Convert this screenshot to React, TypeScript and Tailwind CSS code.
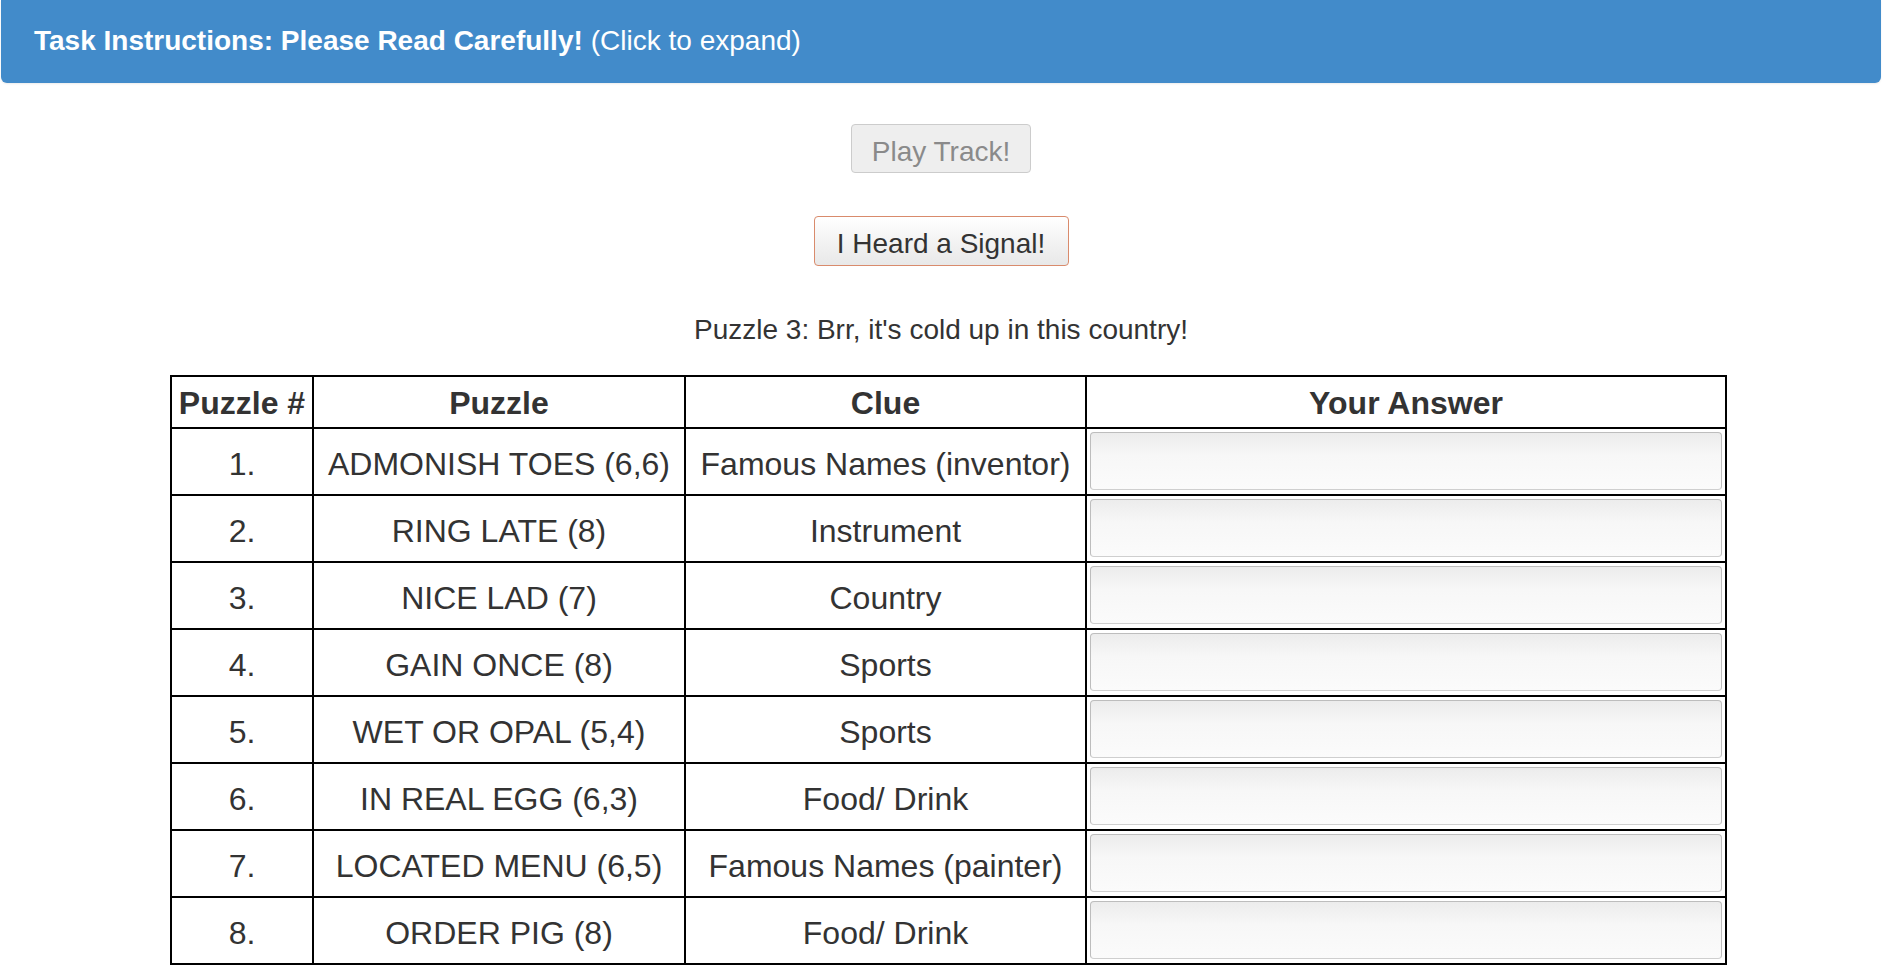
import React from "react";

const rows = [
  ["1.", "ADMONISH TOES (6,6)", "Famous Names (inventor)"],
  ["2.", "RING LATE (8)", "Instrument"],
  ["3.", "NICE LAD (7)", "Country"],
  ["4.", "GAIN ONCE (8)", "Sports"],
  ["5.", "WET OR OPAL (5,4)", "Sports"],
  ["6.", "IN REAL EGG (6,3)", "Food/ Drink"],
  ["7.", "LOCATED MENU (6,5)", "Famous Names (painter)"],
  ["8.", "ORDER PIG (8)", "Food/ Drink"],
];

export default function App() {
  return (
    <div
      className="min-h-[980px] bg-white text-[#333]"
      style={{ fontFamily: '"Liberation Sans", Arial, Helvetica, sans-serif' }}
    >
      <div className="mx-[1px] h-[83px] rounded-b-[6px] bg-[#428bca] shadow-[0_1px_2px_rgba(0,0,0,0.08)] flex items-center pl-[33px] text-white text-[28px] leading-[32px] pb-[1px]">
        <span className="font-bold">Task Instructions: Please Read Carefully!</span>
        <span className="ml-[8px]">(Click to expand)</span>
      </div>

      <div className="flex flex-col items-center">
        <button className="mt-[41px] w-[180px] h-[49px] rounded-[4px] border border-[#cccccc] bg-[#eeeeee] text-[#8a8a8a] text-[28px] leading-[32px] flex items-center justify-center pt-[7px]">
          Play Track!
        </button>
        <button className="mt-[43px] w-[255px] h-[50px] rounded-[4px] border border-[#d98b6c] bg-gradient-to-b from-white to-[#e8e8e8] text-[#333] text-[28px] leading-[32px] flex items-center justify-center pt-[5px]">
          I Heard a Signal!
        </button>
        <div className="mt-[44px] text-[28px] leading-[40px] text-[#333]">
          Puzzle 3: Brr, it's cold up in this country!
        </div>
      </div>

      <div className="pl-[170px] mt-[25px]">
        <table className="border-separate border-spacing-0 table-fixed w-[1557px] border-l-2 border-t-2 border-black text-[32px] leading-[36px]">
          <colgroup>
            <col className="w-[142px]" />
            <col className="w-[372px]" />
            <col className="w-[401px]" />
            <col className="w-[640px]" />
          </colgroup>
          <thead>
            <tr className="h-[52px]">
              {["Puzzle #", "Puzzle", "Clue", "Your Answer"].map((h) => (
                <th
                  key={h}
                  className="border-r-2 border-b-2 border-black font-bold text-center px-0 pt-[2px] pb-0 align-middle whitespace-nowrap"
                >
                  {h}
                </th>
              ))}
            </tr>
          </thead>
          <tbody>
            {rows.map((r) => (
              <tr key={r[0]} className="h-[67px]">
                <td className="border-r-2 border-b-2 border-black text-center align-middle px-0 pt-[5px] pb-0">{r[0]}</td>
                <td className="border-r-2 border-b-2 border-black text-center align-middle px-0 pt-[5px] pb-0 whitespace-nowrap">{r[1]}</td>
                <td className="border-r-2 border-b-2 border-black text-center align-middle px-0 pt-[5px] pb-0 whitespace-nowrap">{r[2]}</td>
                <td className="border-r-2 border-b-2 border-black align-middle pt-[3px] pb-[4px] px-[3px]">
                  <input
                    type="text"
                    className="block w-full h-[58px] rounded-[4px] border border-[#bdbdbd] border-b-[#cfcfcf] bg-gradient-to-b from-[#ececec] via-[#f7f7f7] via-40% to-[#fbfbfb] outline-none"
                  />
                </td>
              </tr>
            ))}
          </tbody>
        </table>
      </div>
    </div>
  );
}
